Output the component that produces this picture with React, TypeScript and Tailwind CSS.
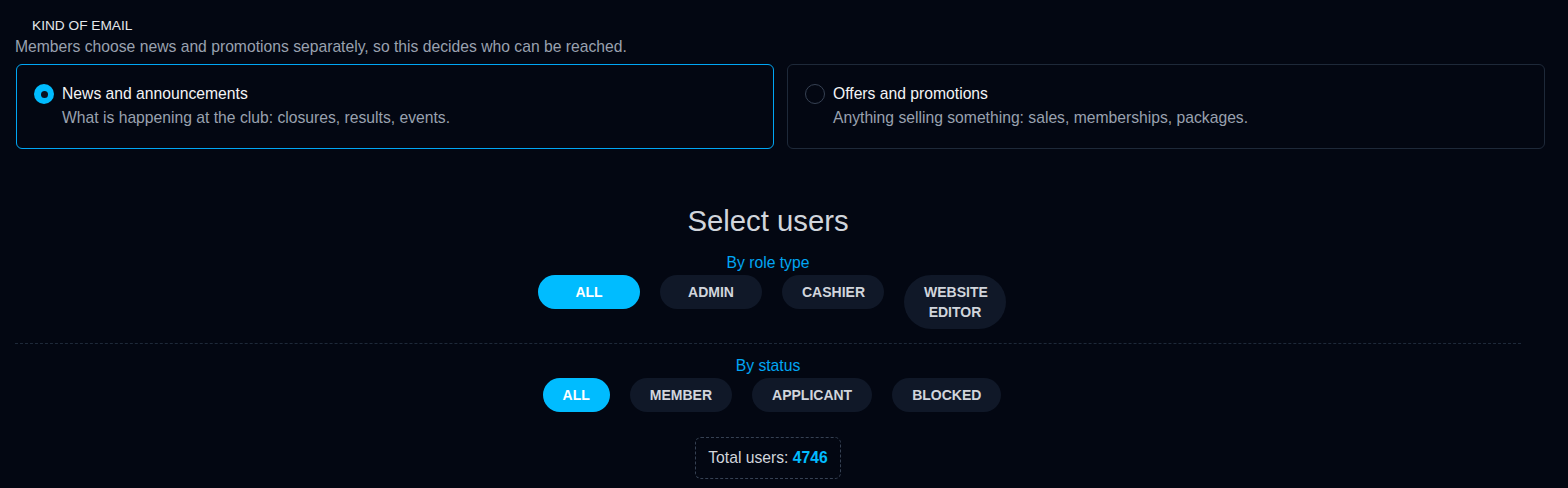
import { useState } from "react";

type Kind = "news" | "offers";

const KIND_OPTIONS: { value: Kind; label: string; description: string }[] = [
  { value: "news", label: "News and announcements", description: "What is happening at the club: closures, results, events." },
  { value: "offers", label: "Offers and promotions", description: "Anything selling something: sales, memberships, packages." },
];

const ROLES = ["All", "Admin", "Cashier", "Website editor"];
const STATUSES = ["All", "Member", "Applicant", "Blocked"];

export default function App() {
  const [kind, setKind] = useState<Kind>("news");
  const [role, setRole] = useState("All");
  const [status, setStatus] = useState("All");

  return (
    <div className="min-h-screen bg-[#030712] pl-4 pr-[23px] pt-[17px] font-['Liberation_Sans',Arial,sans-serif]">
      {/* Kind of email */}
      <p className="pl-4 text-[13.7px] leading-4 uppercase text-gray-200 mt-px">Kind of email</p>
      <p className="-ml-px mt-[3px] text-[15.7px] leading-5 text-gray-400">
        Members choose news and promotions separately, so this decides who can be reached.
      </p>

      <div className="mt-[7px] grid grid-cols-2 gap-[13px]">
        {KIND_OPTIONS.map((opt) => {
          const active = kind === opt.value;
          return (
            <button
              key={opt.value}
              onClick={() => setKind(opt.value)}
              className={`flex items-start gap-2 rounded-md border px-[17px] pt-[19px] pb-5 text-left ${
                active ? "border-sky-500" : "border-gray-800"
              }`}
            >
              <span
                className={`flex h-5 w-5 shrink-0 items-center justify-center rounded-full ${
                  active ? "bg-sky-400" : "border border-gray-700"
                }`}
              >
                {active && <span className="h-[7px] w-[7px] rounded-full bg-[#0b1120]" />}
              </span>
              <span className="flex flex-col">
                <span className="text-[15.7px] leading-5 text-gray-100">{opt.label}</span>
                <span className="mt-1 text-[15.7px] leading-5 text-gray-400">{opt.description}</span>
              </span>
            </button>
          );
        })}
      </div>

      {/* Select users */}
      <div className="-ml-px mr-6 mt-[54px] flex flex-col items-center">
        <h2 className="text-[29.3px] leading-9 text-gray-300">Select users</h2>

        <p className="mt-[14px] text-[15.7px] leading-5 text-sky-500">By role type</p>
        <div className="mt-[2px] flex items-start gap-5 pl-2">
          {ROLES.map((r) => (
            <button
              key={r}
              onClick={() => setRole(r)}
              className={`w-[102px] rounded-full px-5 py-[7px] text-[14px] font-bold leading-5 uppercase ${
                role === r ? "bg-sky-400 text-white" : "bg-gray-900 text-gray-300"
              }`}
            >
              {r}
            </button>
          ))}
        </div>

        <div className="mt-[14px] w-full border-t border-dashed border-gray-800" />

        <p className="mt-3 text-[15.7px] leading-5 text-sky-500">By status</p>
        <div className="mt-[2px] flex items-start gap-5 pl-2">
          {STATUSES.map((s) => (
            <button
              key={s}
              onClick={() => setStatus(s)}
              className={`rounded-full px-5 py-[7px] text-[14px] font-bold leading-5 uppercase ${
                status === s ? "bg-sky-400 text-white" : "bg-gray-900 text-gray-300"
              }`}
            >
              {s}
            </button>
          ))}
        </div>

        <div className="mt-[25px] rounded-md border border-dashed border-gray-700 px-3 py-[10px] text-[15.7px] leading-5 text-gray-300">
          Total users: <span className="font-bold text-sky-400">4746</span>
        </div>
      </div>
    </div>
  );
}
